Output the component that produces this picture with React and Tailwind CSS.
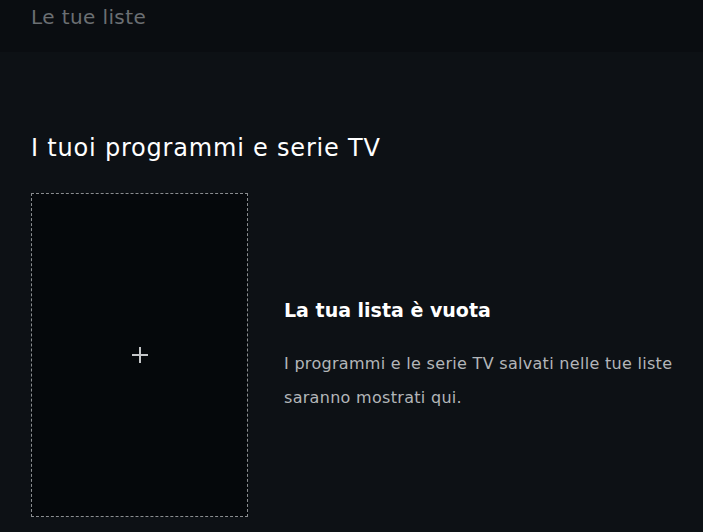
export default function App() {
  return (
    <div
      className="w-[703px] h-[532px] overflow-hidden bg-[#0d1115] text-white"
      style={{ fontFamily: '"DejaVu Sans", "Open Sans", sans-serif' }}
    >
      {/* Header */}
      <div className="h-[52px] bg-[#0a0d11] px-[31px] pt-[3px]">
        <h2 className="text-[20px] leading-[28px] tracking-[0.4px] text-[#6b6f73]">Le tue liste</h2>
      </div>

      <div className="pl-[31px] pr-[8px] pt-[79px]">
        <h1 className="text-[24px] leading-[34px] tracking-[0.8px] text-white">I tuoi programmi e serie TV</h1>

        <div className="mt-[28px] flex items-center gap-[36px]">
          <div className="w-[217px] h-[324px] shrink-0 border border-dashed border-[#8a8d90] bg-[#05080b] flex items-center justify-center">
            <svg width="18" height="18" viewBox="0 0 18 18">
              <path d="M9 1v16M1 9h16" stroke="#c4c6c8" strokeWidth="2" />
            </svg>
          </div>
          <div>
            <h3 className="text-[19px] leading-[28px] font-semibold text-white">La tua lista è vuota</h3>
            <p className="mt-[23px] text-[16px] leading-[34px] tracking-[0.3px] text-[#b3b6b9] max-w-[405px]">
              I programmi e le serie TV salvati nelle tue liste saranno mostrati qui.
            </p>
          </div>
        </div>
      </div>
    </div>
  );
}
